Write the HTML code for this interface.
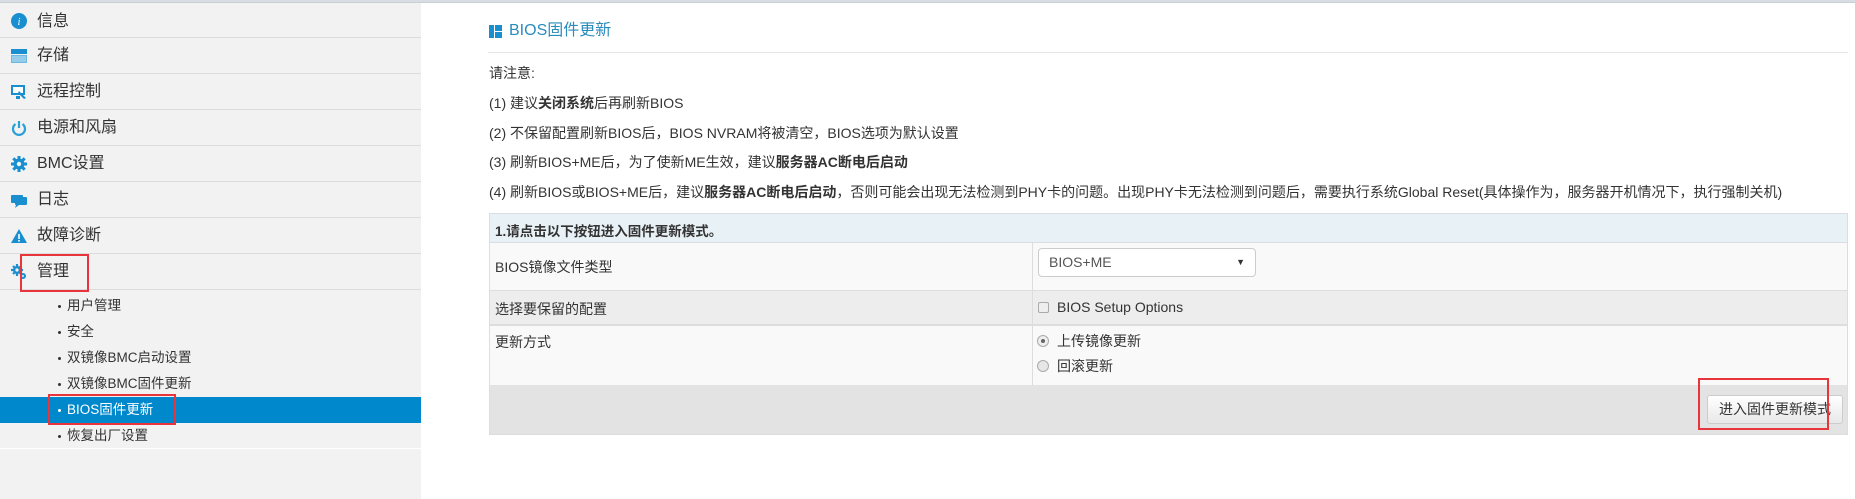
<!DOCTYPE html>
<html><head><meta charset="utf-8"><style>
*{margin:0;padding:0;box-sizing:border-box}
body{width:1855px;height:499px;position:relative;overflow:hidden;background:#fff;font-family:"Liberation Sans","Noto Sans CJK SC",sans-serif;color:#333;font-size:14px}
.a{position:absolute;white-space:nowrap}
#top{left:0;top:0;width:1855px;height:3px;background:#d7dde3;border-bottom:1px solid #c8ced4}
#side{left:0;top:3px;width:421px;height:496px;background:#f2f2f2}
.mi{position:absolute;left:0;width:421px;height:36px;border-bottom:1px solid #dcdcdc;font-size:16px;line-height:36px;padding-left:37px;color:#333}
.ic{position:absolute;left:11px;top:10px;width:16px;height:16px}
.sub{position:absolute;left:0;width:421px;height:26px;line-height:26px;padding-left:67px;font-size:13.5px;color:#333}
.sub:before{content:"";position:absolute;left:58px;top:12px;width:3px;height:3px;border-radius:50%;background:#333}
.sel{background:#0088cc;color:#fff}
.sel:before{background:#fff}
.red{position:absolute;border:2px solid #e8343b}
.ln{left:489px;font-size:14px;line-height:20px}
.row{position:absolute;left:489px;width:1359px;border-left:1px solid #ddd;border-right:1px solid #ddd}
</style></head><body>
<div class="a" id="top"></div>
<div class="a" id="side">
<div class="mi" style="top:0;height:35px;line-height:38px"><svg class="ic" viewBox="0 0 16 16"><circle cx="8" cy="8" r="8" fill="#1a8fd0"/><text x="8" y="12" font-size="10" fill="#fff" text-anchor="middle" font-style="italic" font-family="Liberation Serif">i</text></svg>信息</div>
<div class="mi" style="top:35px"><svg class="ic" viewBox="0 0 16 16"><rect x="0" y="1" width="16" height="5" fill="#1a8fd0"/><rect x="0" y="7" width="16" height="8" fill="#6cb8e0"/><path d="M1 9h14M1 11h14M1 13h14" stroke="#d8ecf7" stroke-width="0.8"/></svg>存储</div>
<div class="mi" style="top:71px"><svg class="ic" viewBox="0 0 16 16"><rect x="0" y="1" width="14" height="10" fill="#1a8fd0"/><rect x="2" y="3" width="10" height="6" fill="#fff"/><rect x="5" y="12" width="4" height="3" fill="#1a8fd0"/><path d="M8 7l7 7-2 1-6-6z" fill="#1a8fd0"/></svg>远程控制</div>
<div class="mi" style="top:107px"><svg class="ic" viewBox="0 0 16 16"><path d="M4.5 4A6 6 0 1 0 11.5 4" stroke="#2aa0d8" stroke-width="2.2" fill="none"/><path d="M8 1v7" stroke="#2aa0d8" stroke-width="2.2"/></svg>电源和风扇</div>
<div class="mi" style="top:143px"><svg class="ic" viewBox="0 0 16 16"><circle cx="8" cy="8" r="5.5" fill="#1a8fd0"/><path d="M8 0v16M0 8h16M2.3 2.3l11.4 11.4M13.7 2.3L2.3 13.7" stroke="#1a8fd0" stroke-width="3"/><circle cx="8" cy="8" r="2.2" fill="#f2f2f2"/></svg>BMC设置</div>
<div class="mi" style="top:179px"><svg class="ic" viewBox="0 0 16 16"><rect x="0" y="3" width="12" height="8" rx="1" fill="#1a8fd0"/><rect x="4" y="5" width="12" height="8" rx="1" fill="#1a8fd0"/><path d="M5 13l-1 3 4-3z" fill="#1a8fd0"/></svg>日志</div>
<div class="mi" style="top:215px"><svg class="ic" viewBox="0 0 16 16"><path d="M8 1L16 15H0z" fill="#1a8fd0"/><rect x="7.2" y="6" width="1.6" height="5" fill="#fff"/><rect x="7.2" y="12" width="1.6" height="1.6" fill="#fff"/></svg>故障诊断</div>
<div class="mi" style="top:251px;border-bottom:1px solid #dcdcdc"><svg class="ic" viewBox="0 0 16 16"><circle cx="6" cy="6" r="4" fill="#1a8fd0"/><path d="M6 0v12M0 6h12M2 2l8 8M10 2l-8 8" stroke="#1a8fd0" stroke-width="2.2"/><circle cx="6" cy="6" r="1.6" fill="#f2f2f2"/><circle cx="12" cy="12" r="3" fill="#1a8fd0"/><circle cx="12" cy="12" r="1" fill="#f2f2f2"/></svg>管理</div>
<div class="sub" style="top:290px">用户管理</div>
<div class="sub" style="top:316px">安全</div>
<div class="sub" style="top:342px">双镜像BMC启动设置</div>
<div class="sub" style="top:368px">双镜像BMC固件更新</div>
<div class="sub sel" style="top:394px">BIOS固件更新</div>
<div class="sub" style="top:420px">恢复出厂设置</div>
<div class="a" style="left:0;top:445px;width:421px;height:1px;background:#fff"></div>
</div>
<div class="red" style="left:20px;top:254px;width:69px;height:38px"></div>
<div class="red" style="left:48px;top:394px;width:128px;height:31px"></div>

<svg class="a" style="left:489px;top:25px" width="13" height="13" viewBox="0 0 13 13"><rect x="0" y="0" width="5" height="13" fill="#1a8fd0"/><rect x="6" y="0" width="7" height="6" fill="#1a8fd0"/><rect x="6" y="7" width="7" height="6" fill="#1a8fd0"/></svg>
<div class="a" style="left:509px;top:21px;font-size:16px;line-height:20px;color:#2a8bbd">BIOS固件更新</div>
<div class="a" style="left:488px;top:52px;width:1360px;height:1px;background:#e6e6e6"></div>
<div class="a ln" style="top:63px">请注意:</div>
<div class="a ln" style="top:93px">(1) 建议<b>关闭系统</b>后再刷新BIOS</div>
<div class="a ln" style="top:123px">(2) 不保留配置刷新BIOS后，BIOS NVRAM将被清空，BIOS选项为默认设置</div>
<div class="a ln" style="top:152px">(3) 刷新BIOS+ME后，为了使新ME生效，建议<b>服务器AC断电后启动</b></div>
<div class="a ln" style="top:182px">(4) 刷新BIOS或BIOS+ME后，建议<b>服务器AC断电后启动</b>，否则可能会出现无法检测到PHY卡的问题。出现PHY卡无法检测到问题后，需要执行系统Global Reset(具体操作为，服务器开机情况下，执行强制关机)</div>

<div class="row" style="top:213px;height:30px;background:#e8f1f5;border-top:1px solid #ddd;border-bottom:1px solid #ddd"><div class="a" style="left:5px;top:6px;font-weight:bold;font-size:13.5px">1.请点击以下按钮进入固件更新模式。</div></div>
<div class="row" style="top:243px;height:48px;background:#f9f9f9;border-bottom:1px solid #ddd"><div class="a" style="left:5px;top:14px">BIOS镜像文件类型</div></div>
<div class="row" style="top:291px;height:35px;background:#ededed;border-bottom:2px solid #ddd"><div class="a" style="left:5px;top:8px">选择要保留的配置</div></div>
<div class="row" style="top:326px;height:59px;background:#f9f9f9"><div class="a" style="left:5px;top:6px">更新方式</div></div>
<div class="row" style="top:385px;height:50px;background:#e3e3e3;border-bottom:1px solid #ddd"></div>
<div class="a" style="left:1032px;top:243px;width:1px;height:142px;background:#ddd"></div>

<div class="a" style="left:1038px;top:248px;width:218px;height:29px;background:#fff;border:1px solid #ccc;border-radius:4px;padding-left:10px;line-height:27px;color:#555">BIOS+ME<span style="position:absolute;right:10px;top:0;font-size:9px;color:#333">▼</span></div>
<div class="a" style="left:1038px;top:302px;width:11px;height:11px;border:1px solid #aaa;border-radius:2px;background:#eee"></div>
<div class="a" style="left:1057px;top:297px;line-height:20px">BIOS Setup Options</div>
<div class="a" style="left:1037px;top:335px;width:12px;height:12px;border:1px solid #aaa;border-radius:50%;background:#eee"><div style="margin:3px;width:4px;height:4px;border-radius:50%;background:#666"></div></div>
<div class="a" style="left:1057px;top:331px;line-height:20px">上传镜像更新</div>
<div class="a" style="left:1037px;top:360px;width:12px;height:12px;border:1px solid #aaa;border-radius:50%;background:#e6e6e6"></div>
<div class="a" style="left:1057px;top:356px;line-height:20px">回滚更新</div>

<div class="a" style="left:1707px;top:395px;width:136px;height:29px;background:linear-gradient(#fff,#e8e8e8);border:1px solid #ccc;border-radius:3px;text-align:center;line-height:27px;font-size:14px">进入固件更新模式</div>
<div class="red" style="left:1698px;top:378px;width:131px;height:52px"></div>
</body></html>
